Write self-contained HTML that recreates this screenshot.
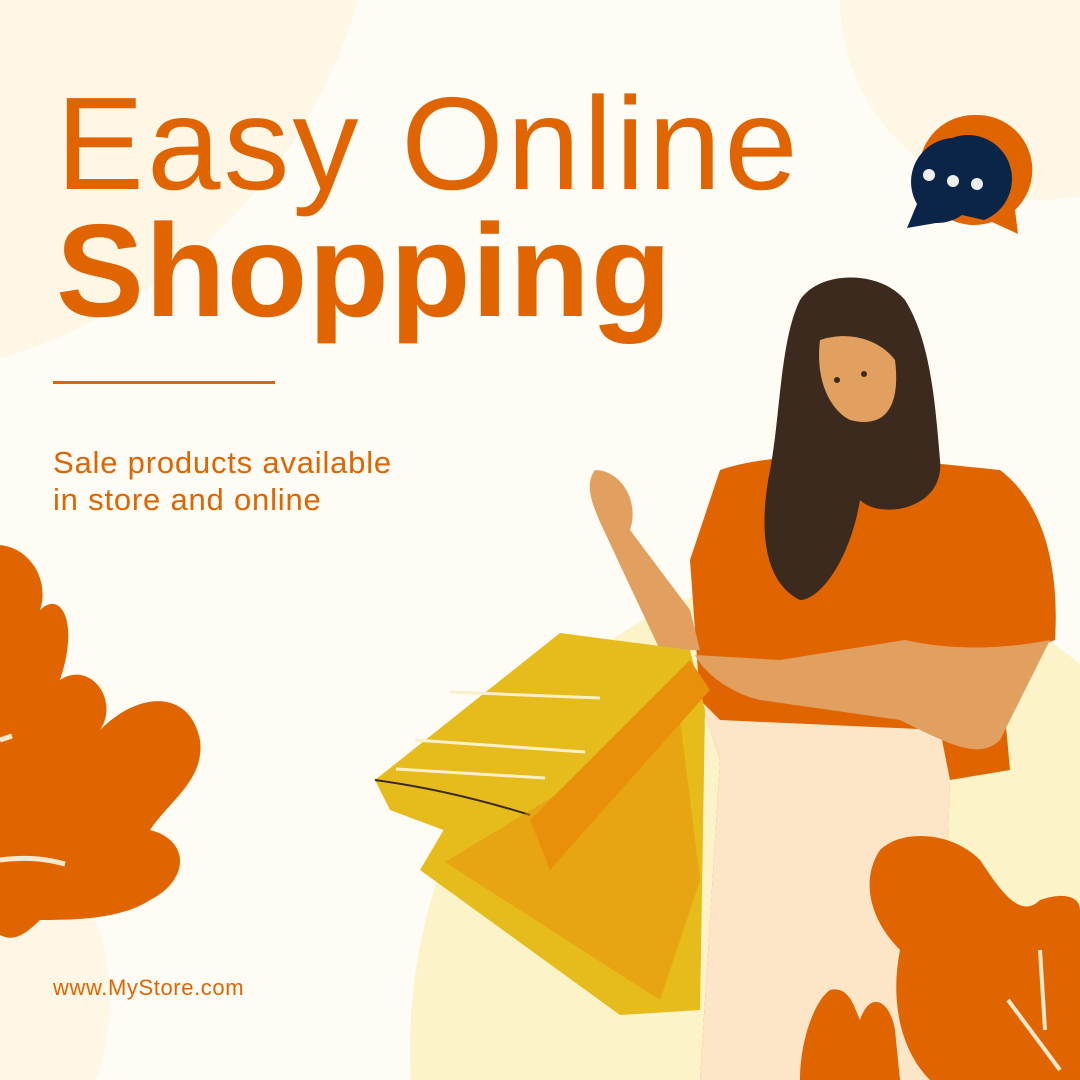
<!DOCTYPE html>
<html><head><meta charset="utf-8"><style>
html,body{margin:0;padding:0;overflow:hidden;width:1080px;height:1080px}
body{background:#fffbf5;position:relative;font-family:"Liberation Sans",sans-serif;color:#e06500}
.t{position:absolute;left:56px;white-space:nowrap;line-height:1}
</style></head><body>
<svg width="1080" height="1080" style="position:absolute;left:0;top:0">
<circle cx="-150" cy="-150" r="530" fill="#fef7e6"/>
<circle cx="1040" cy="0" r="200" fill="#fef7e6"/>
<circle cx="-120" cy="1000" r="230" fill="#fef7e6"/>
<ellipse cx="830" cy="1050" rx="420" ry="480" fill="#fdf3c8"/>
<path d="M975 115 a55 55 0 0 1 40 95 l3 24 -26 -12 a55 55 0 1 1 -17 -107z" fill="#e06500"/>
<path d="M952 138 a44 44 0 0 1 32 82 l-22 -5 a44 44 0 0 1 -26 8 l-29 5 10 -24 a44 44 0 0 1 35 -66z" fill="#0b2548"/>
<circle cx="929" cy="175" r="6" fill="#eee"/><circle cx="953" cy="181" r="6" fill="#eee"/><circle cx="977" cy="184" r="6" fill="#eee"/>
<path d="M0 545 C30 548 50 580 40 610 C60 590 80 620 60 680 C90 660 120 700 100 730 C140 690 190 690 200 740 C205 780 170 800 150 830 C190 840 190 880 150 900 C120 920 70 920 40 920 C20 940 10 940 0 935 Z" fill="#e06500"/>
<path d="M0 860 C30 856 50 860 65 864" stroke="#fde8cc" stroke-width="5" fill="none"/>
<path d="M0 740 L12 736" stroke="#fde8cc" stroke-width="5"/>
<path d="M720 470 C780 450 860 455 1000 470 C1040 500 1060 560 1055 640 L1000 660 L1010 770 L950 780 L940 1080 L700 1080 L720 760 L700 700 L690 560 Z" fill="#e06500"/>
<path d="M700 700 L720 760 L700 1080 L940 1080 L950 780 L940 730 L720 720Z" fill="#fde6c8"/>
<path d="M905 640 C950 650 1000 650 1050 640 L1000 740 C980 760 950 745 900 720 L760 700 C720 690 700 665 695 655 L780 660 Z" fill="#e2a060"/>
<path d="M620 565 C600 520 580 490 595 470 C620 470 640 500 630 530 L690 610 L700 650 L660 650 Z" fill="#e2a060"/>
<path d="M800 300 C820 270 880 270 905 300 C930 340 935 400 940 460 C945 510 880 520 860 500 C850 560 820 600 800 600 C760 580 760 520 770 470 C780 420 780 340 800 300Z" fill="#3d2a1e"/>
<path d="M820 340 C850 330 880 340 895 360 C900 400 890 430 850 420 C830 410 815 380 820 340Z" fill="#e2a060"/>
<circle cx="837" cy="380" r="3" fill="#3d2a1e"/><circle cx="864" cy="374" r="3" fill="#3d2a1e"/>
<path d="M560 633 L690 650 L705 710 L700 1010 L620 1015 L420 870 Z" fill="#e6bb1c"/>
<path d="M375 780 L560 633 L690 660 L530 820 Z" fill="#e6bb1c"/>
<path d="M530 820 L690 660 L710 690 L550 870Z" fill="#e8900a"/>
<path d="M375 780 L530 820 L550 870 L390 810Z" fill="#e6bb1c"/>
<path d="M375 780 Q450 790 530 815" stroke="#3d2a1e" stroke-width="2" fill="none"/>
<path d="M450 692 L600 698 M415 740 L585 752 M396 769 L545 778" stroke="#fdf0c8" stroke-width="3"/>
<path d="M445 862 L680 720 L700 880 L660 1000Z" fill="#e8900a" opacity=".5"/>
<path d="M880 850 C900 830 950 830 980 860 C1000 890 1020 920 1040 900 C1070 890 1080 900 1080 910 L1080 1080 L930 1080 C900 1050 890 1000 900 950 C870 920 860 880 880 850Z" fill="#e06500"/>
<path d="M800 1080 C800 1040 815 1000 830 990 C850 985 855 1010 860 1020 C870 990 890 1000 895 1030 L900 1080Z" fill="#e06500"/>
<path d="M1008 1000 L1060 1070 M1040 950 L1045 1030" stroke="#fde8cc" stroke-width="4" fill="none"/>
</svg>
<div class="t" style="top:78px;font-size:132px;letter-spacing:3px">Easy Online</div>
<div class="t" style="top:205px;font-size:132px;font-weight:bold;letter-spacing:1px">Shopping</div>
<div style="position:absolute;left:53px;top:381px;width:222px;height:3px;background:#e06500"></div>
<div class="t" style="left:53px;top:444px;font-size:31px;line-height:37px;letter-spacing:0.8px">Sale products available<br>in store and online</div>
<div class="t" style="left:53px;top:977px;font-size:22px;letter-spacing:0.6px">www.MyStore.com</div>
</body></html>
